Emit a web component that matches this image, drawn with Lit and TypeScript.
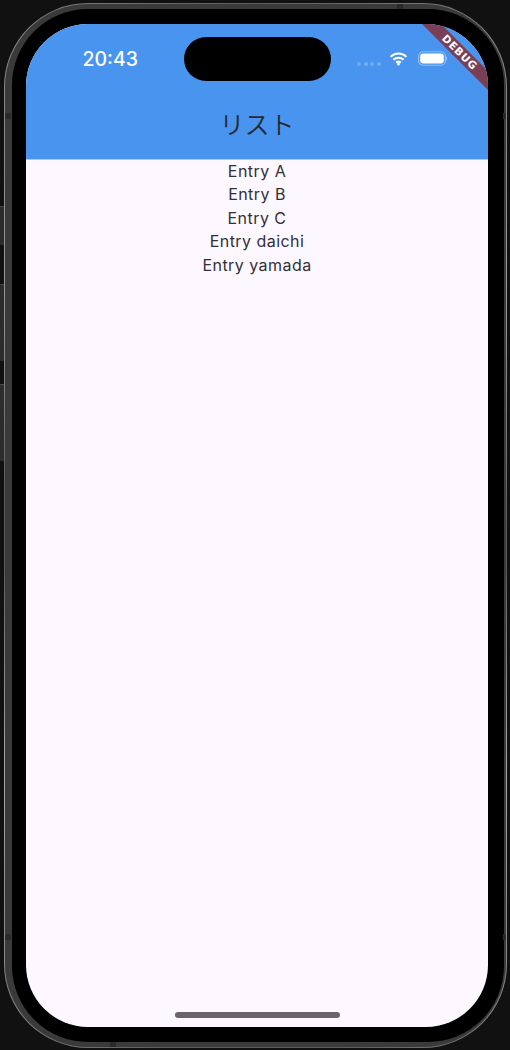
import { LitElement, html, css, svg } from "lit";
import { customElement } from "lit/decorators.js";

@customElement("app-root")
export class AppRoot extends LitElement {
  static styles = css`
    :host { display: block; width: 510px; height: 1050px; background: #111111; overflow: hidden; position: relative; font-family: Inter, "Noto Sans CJK JP", sans-serif; }
    .btn { position: absolute; left: 0; width: 4px; background: #2c2c2c; border-top: 1px solid #484848; box-sizing: border-box; }
    .b1 { top: 206px; height: 39px; }
    .b2 { top: 284px; height: 77px; }
    .b3 { top: 384px; height: 77px; }
    .device { position: absolute; left: 4px; top: 3px; width: 503px; height: 1045px; box-sizing: border-box; border-radius: 84px; padding: 1px;
      background: conic-gradient(#5c5c5c 0deg, #9a9a9a 45deg, #5c5c5c 90deg, #5c5c5c 100deg, #a8a8a8 135deg, #5c5c5c 170deg, #5c5c5c 190deg, #a8a8a8 225deg, #5c5c5c 260deg, #5c5c5c 280deg, #9a9a9a 315deg, #5c5c5c 360deg); }
    .frame { height: 100%; box-sizing: border-box; border-radius: 83px; background: #3a3a3a; padding: 5px 2.5px 5px 6.5px; }
    .bezel { height: 100%; box-sizing: border-box; border-radius: 76px; background: #000; padding: 15px 15.5px 15px 14.5px; }
    .screen { position: relative; height: 100%; border-radius: 62px; overflow: hidden; background: #fdf8ff; display: flex; flex-direction: column; }
    .bar { height: 135px; flex: none; background: #4894ee; display: flex; flex-direction: column; align-items: center; position: relative; border-bottom: 1px solid #a9ccf6; box-sizing: content-box; }
    .title { margin-top: 81px; font-size: 25px; line-height: 36px; color: #27292e; font-weight: 350; font-family: "Noto Sans CJK JP", sans-serif; }
    .time { position: absolute; left: 56.5px; top: 21.5px; font-size: 19.5px; line-height: 26px; font-weight: 500; color: #fff; }
    .island { position: absolute; left: 157.5px; top: 13px; width: 147px; height: 43.5px; border-radius: 22px; background: #000; }
    .dots { position: absolute; left: 331px; top: 37.5px; display: flex; gap: 2.5px; }
    .dots i { width: 4px; height: 4px; border-radius: 50%; background: #75adf1; display: block; }
    .wifi { position: absolute; left: 363px; top: 27.5px; width: 19px; height: 14px; }
    .batt { position: absolute; left: 392px; top: 27px; width: 29px; height: 15px; }
    .ribbon { position: absolute; left: 0; top: 0; width: 462px; height: 90px; pointer-events: none; }
    .list { display: flex; flex-direction: column; align-items: center; font-size: 16px; line-height: 23.4px; letter-spacing: 0.45px; color: #322f37; }
    .home { position: absolute; left: 149px; bottom: 9px; width: 165px; height: 6px; border-radius: 3px; background: #68666b; }
    .tick { position: absolute; background: #2a2a2a; }
    .tv { width: 6px; height: 6px; }
    .l1 { left: 5px; top: 113px; }
    .l2 { left: 5px; top: 934px; }
    .r1 { left: 503px; top: 113px; width: 3px; }
    .r2 { left: 503px; top: 934px; width: 3px; }
    .t1 { left: 397px; top: 4px; height: 5px; }
    .t2 { left: 110px; top: 1042px; height: 5px; }
  `;

  render() {
    const items = ["Entry A", "Entry B", "Entry C", "Entry daichi", "Entry yamada"];
    return html`
      <div class="btn b1"></div><div class="btn b2"></div><div class="btn b3"></div>
      <div class="device"><div class="frame"><div class="bezel"><div class="screen">
        <div class="bar">
          <div class="time">20:43</div>
          <div class="island"></div>
          <div class="dots"><i></i><i></i><i></i><i></i></div>
          <svg class="wifi" viewBox="0 0 19 15" fill="none" stroke="#fff" stroke-width="2.2">
            <path d="M1 5.2 A12 12 0 0 1 18 5.2"/>
            <path d="M4 8.4 A8 8 0 0 1 15 8.4"/>
            <path d="M7 11.4 A3.8 3.8 0 0 1 12 11.4"/>
            <circle cx="9.5" cy="13" r="1.4" fill="#fff" stroke="none"/>
          </svg>
          <svg class="batt" viewBox="0 0 29 15">
            <rect x="0.6" y="0.75" width="26.8" height="13.5" rx="4.5" fill="none" stroke="#8fbdf5" stroke-width="1.2"/>
            <rect x="2.2" y="2.4" width="23.6" height="10.2" rx="3" fill="#fff"/>
            <rect x="28" y="5.5" width="1" height="4" rx="0.5" fill="#8fbdf5"/>
          </svg>
          <div class="title">リスト</div>
          <svg class="ribbon" viewBox="0 0 462 90">
            <polygon points="396,0 415,0 462,47 462,66" fill="#7a3f55"/>
            ${svg`<text x="0" y="4" transform="translate(434 28) rotate(45)" text-anchor="middle" font-family="'DejaVu Sans', sans-serif" font-weight="700" font-size="10.5" letter-spacing="0.8" fill="#fff">DEBUG</text>`}
          </svg>
        </div>
        <div class="list">${items.map((t) => html`<div>${t}</div>`)}</div>
        <div class="home"></div>
      </div></div></div></div>
      <div class="tick tv l1"></div><div class="tick tv l2"></div>
      <div class="tick tv r1"></div><div class="tick tv r2"></div>
      <div class="tick tv t1"></div><div class="tick tv t2"></div>
    `;
  }
}
